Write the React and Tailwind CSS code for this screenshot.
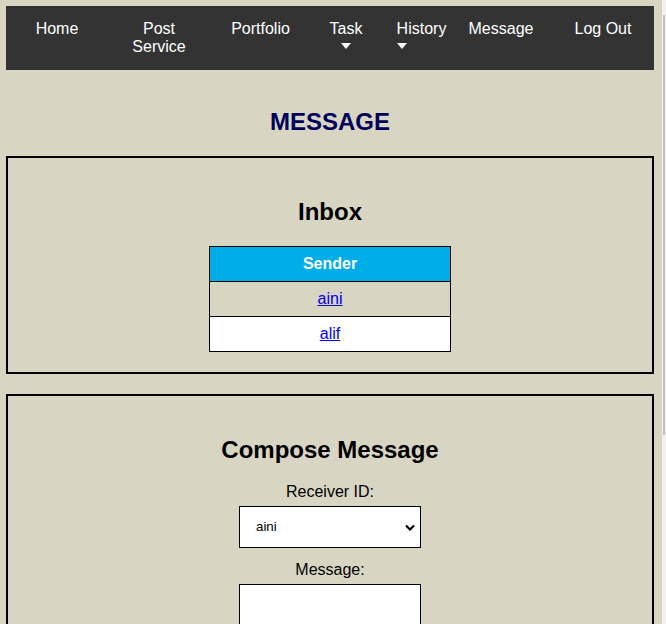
import React from "react";

function Arrow() {
  return (
    <svg width="10" height="6" viewBox="0 0 10 6" className="inline-block">
      <polygon points="0,0 10,0 5,6" fill="#ffffff" />
    </svg>
  );
}

export default function App() {
  return (
    <div className="relative h-[624px] w-[666px] overflow-hidden bg-[#d8d6c3] font-['Liberation_Sans',Arial,sans-serif] text-black">
      <div className="ml-[6px] w-[648px] pt-[6px]">
        <nav className="flex h-[64px] items-start bg-[#333333] text-[16px] leading-[18px] text-white">
          <div className="w-[102px] pt-[14px] text-center">Home</div>
          <div className="w-[102px] pt-[14px] text-center">
            Post
            <br />
            Service
          </div>
          <div className="w-[101px] pt-[14px] text-center">Portfolio</div>
          <div className="w-[70px] pt-[14px] text-center">
            Task
            <div className="flex h-[15px] items-center justify-center">
              <Arrow />
            </div>
          </div>
          <div className="w-[81px] pt-[14px] text-center">
            <div className="inline-block text-left">
              History
              <div className="flex h-[15px] items-center">
                <Arrow />
              </div>
            </div>
          </div>
          <div className="w-[78px] pt-[14px] text-center">Message</div>
          <div className="w-[12px]" />
          <div className="w-[102px] pt-[14px] text-center">Log Out</div>
        </nav>

        <h1 className="mb-[20px] mt-[38px] text-center text-[24px] font-bold leading-[28px] text-[#00005a]">
          MESSAGE
        </h1>

        <section className="border-2 border-black p-[20px]">
          <h2 className="mb-[20px] mt-[20px] text-center text-[24px] font-bold leading-[28px]">
            Inbox
          </h2>
          <table className="mx-auto w-[242px] border-collapse text-[16px]">
            <thead>
              <tr>
                <th className="h-[35px] border border-black bg-[#00ade6] p-0 text-center font-bold text-white">
                  Sender
                </th>
              </tr>
            </thead>
            <tbody>
              <tr>
                <td className="h-[35px] border border-black p-0 text-center">
                  <a href="#" className="text-[#0000ee] underline">
                    aini
                  </a>
                </td>
              </tr>
              <tr>
                <td className="h-[35px] border border-black bg-white p-0 text-center">
                  <a href="#" className="text-[#0000ee] underline">
                    alif
                  </a>
                </td>
              </tr>
            </tbody>
          </table>
        </section>

        <section className="mt-[20px] border-2 border-black p-[20px]">
          <h2 className="mb-[18px] mt-[20px] text-center text-[24px] font-bold leading-[28px]">
            Compose Message
          </h2>
          <div className="flex flex-col items-center">
            <label className="block text-[16px] leading-[19px]">Receiver ID:</label>
            <div className="relative mt-[5px] h-[42px] w-[182px] border border-black bg-white">
              <div className="pl-[16px] text-[13.33px] leading-[40px] text-black">aini</div>
              <svg
                width="10"
                height="7"
                viewBox="0 0 10 7"
                className="absolute right-[5px] top-[17px]"
              >
                <polyline
                  points="1,1.5 5,5.5 9,1.5"
                  fill="none"
                  stroke="#000"
                  strokeWidth="2.2"
                />
              </svg>
            </div>
            <label className="mt-[12px] block text-[16px] leading-[19px]">Message:</label>
            <div className="mt-[5px] h-[100px] w-[182px] border border-black bg-white" />
          </div>
        </section>
      </div>

      <div className="absolute right-0 top-0 h-full w-[4px] bg-[#f1f1f1]">
        <div className="ml-[1px] mt-[15px] h-[420px] w-[2px] bg-[#c1c1c1]" />
      </div>
    </div>
  );
}
